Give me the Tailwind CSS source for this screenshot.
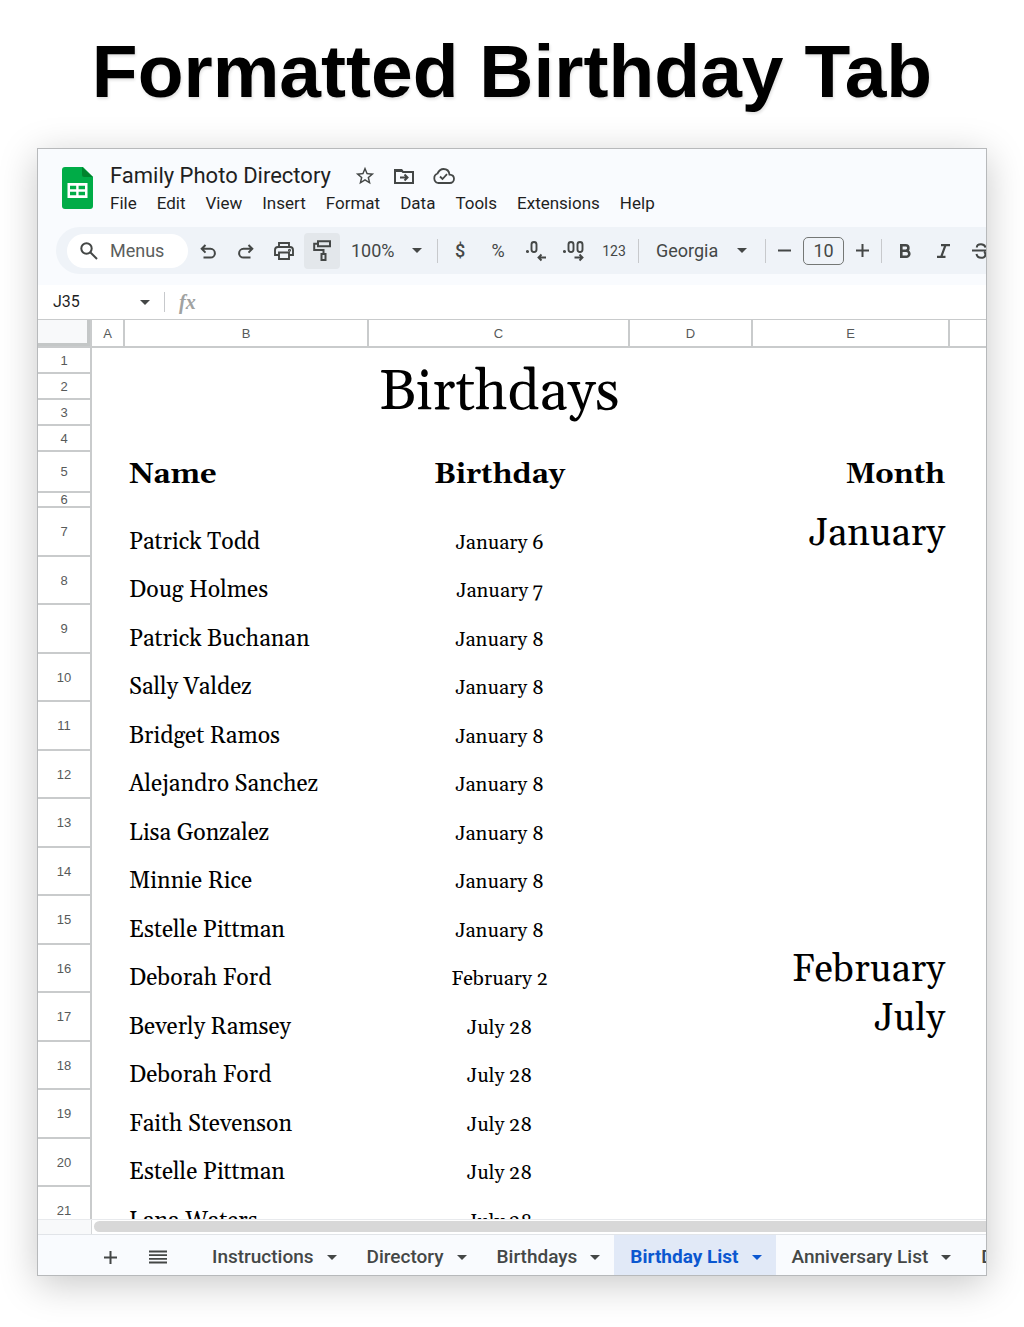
<!DOCTYPE html>
<html lang="en">
<head>
  <meta charset="UTF-8">
  <meta name="viewport" content="width=device-width, initial-scale=1.0">
  <title>Formatted Birthday Tab</title>
  <script src="https://cdn.jsdelivr.net/npm/@tailwindcss/browser@4"></script>
</head>
<body class="bg-white h-screen flex flex-col px-[37px] pb-[51px] font-[Roboto,sans-serif] text-[#444746]">
  <h1 class="h-[148px] shrink-0 pt-[26px] text-center text-[75px] leading-[90px] font-bold text-black whitespace-nowrap font-['Liberation_Sans',Arial,sans-serif] [text-shadow:1px_2px_3px_rgba(0,0,0,0.12)]">Formatted Birthday Tab</h1>

  <main class="flex-1 min-h-0 flex flex-col overflow-hidden border border-[#b7b9bb] bg-white shadow-[0_8px_36px_rgba(0,0,0,0.22)]">
    <!-- Title, menus and toolbar -->
    <header class="shrink-0 bg-[#f9fbfe] pb-[11px]">
      <div class="flex items-start pl-6 pt-[18px] h-[78px]">
        <svg class="w-[31px] h-[42px] shrink-0" viewBox="0 0 31 42" aria-hidden="true">
          <path d="M3 0h18l10 10v29a3 3 0 0 1-3 3H3a3 3 0 0 1-3-3V3a3 3 0 0 1 3-3z" fill="#00ac47"/>
          <path d="M20 0l11 10H22a2 2 0 0 1-2-2z" fill="#00832d"/>
          <path d="M5.500 16h20v15h-20zM8 18.800v3.400h6.200v-3.400zm8.600 0v3.400H23v-3.400zM8 24.800v3.400h6.200v-3.400zm8.600 0v3.400H23v-3.400z" fill="#fff" fill-rule="evenodd"/>
        </svg>
        <div class="ml-[17px] min-w-0">
          <div class="flex items-center h-[18px]">
            <h2 class="text-[22px] leading-7 text-[#1f1f1f] whitespace-nowrap">Family Photo Directory</h2>
            <button class="ml-[23px]" aria-label="Star">
              <svg class="w-[22px] h-[22px]" viewBox="0 0 24 24" fill="currentColor"><path d="M22 9.240l-7.190-.62L12 2 9.190 8.630 2 9.240l5.460 4.730L5.820 21 12 17.270 18.180 21l-1.630-7.030L22 9.240zM12 15.400l-3.760 2.270 1-4.280-3.320-2.880 4.380-.38L12 6.100l1.710 4.040 4.380.38-3.320 2.880 1 4.280L12 15.400z"/></svg>
            </button>
            <button class="ml-[18px]" aria-label="Move">
              <svg class="w-5 h-4" viewBox="0 0 20 16" fill="none" stroke="currentColor" stroke-width="2"><path d="M1 14V2h6l2 2h10v11H1z"/><path d="M1 1h7l2 3H1z" fill="currentColor" stroke="none"/><path d="M6 9.500h7M10.500 6.500l3 3-3 3"/></svg>
            </button>
            <button class="ml-[18px]" aria-label="Saved to Drive">
              <svg class="w-[23px] h-4" viewBox="0 0 23 16" fill="none" stroke="currentColor" stroke-width="1.800"><path d="M6 15a5 5 0 0 1-.5-9.500C7 2.500 9 1 11.500 1c3.200 0 5.600 2.300 6 5.600C20.300 6.700 22 8.500 22 10.800S20.200 15 17.800 15z"/><path d="M8 8.500l2.500 2.500 4.500-4.800"/></svg>
            </button>
          </div>
          <nav class="flex gap-5 mt-2 text-[17px] leading-5 text-[#1f1f1f]">
            <button>File</button>
            <button>Edit</button>
            <button>View</button>
            <button>Insert</button>
            <button>Format</button>
            <button>Data</button>
            <button>Tools</button>
            <button>Extensions</button>
            <button>Help</button>
          </nav>
        </div>
      </div>

      <div class="flex items-center h-[47px] ml-[18px] pl-[11px] rounded-l-full bg-[#eff3f8] text-lg overflow-hidden [&>*]:shrink-0">
        <label class="flex items-center w-[121px] h-[34px] pl-[13px] rounded-full bg-white">
          <svg class="w-[18px] h-[18px]" viewBox="0 0 18 18" fill="none" stroke="currentColor" stroke-width="2"><circle cx="6.500" cy="6.500" r="5.200"/><path d="M10.500 10.500l6.500 6.500"/></svg>
          <input class="ml-3 w-[62px] outline-none placeholder:text-[#5b5e5d]" type="text" placeholder="Menus" aria-label="Search the menus">
        </label>
        <button class="w-[38px] ml-px flex justify-center pt-0.5" aria-label="Undo">
          <svg class="w-4 h-[15px]" viewBox="0 0 16 15" fill="none" stroke="currentColor" stroke-width="2"><path d="M5.500 1L1.700 4.800l3.800 3.800M2 4.800h8.500a4.400 4.400 0 0 1 0 8.800H3.500"/></svg>
        </button>
        <button class="w-[38px] flex justify-center pt-0.5" aria-label="Redo">
          <svg class="w-4 h-[15px]" viewBox="0 0 16 15" fill="none" stroke="currentColor" stroke-width="2"><path d="M10.500 1l3.800 3.800-3.800 3.800M14 4.800H5.500a4.400 4.400 0 0 0 0 8.800h7"/></svg>
        </button>
        <button class="w-[38px] flex justify-center" aria-label="Print">
          <svg class="w-5 h-[18px]" viewBox="0 0 20 18" fill="none" stroke="currentColor" stroke-width="1.900"><path d="M5 5V1h10v4M5 13H1V8a3 3 0 0 1 3-3h12a3 3 0 0 1 3 3v5h-4"/><path d="M5 10.500h10V17H5z"/><circle cx="15.500" cy="8.200" r=".6"/></svg>
        </button>
        <button class="w-9 h-9 ml-px flex items-center justify-center rounded bg-[#e3e7eb]" aria-label="Paint format">
          <svg class="w-[18px] h-[21px]" viewBox="0 0 18 21" fill="none" stroke="currentColor" stroke-width="2"><path d="M5 1.200h12v5H5zM5 3.700H1.200V10h9.300v4"/><path d="M8.500 14h4v6h-4z"/></svg>
        </button>
        <label class="relative ml-[11px] w-[86px]">
          <select class="appearance-none w-full outline-none" aria-label="Zoom"><option>100%</option></select>
          <svg class="absolute right-[15px] top-[11px] w-[10px] h-[5px] pointer-events-none" viewBox="0 0 10 5" fill="currentColor"><path d="M0 0h10L5 5z"/></svg>
        </label>
        <span class="w-px h-6 bg-[#c7c9cc]"></span>
        <button class="w-[38px] ml-[3px] font-medium">$</button>
        <button class="w-[38px]">%</button>
        <button class="w-[38px] flex justify-center" aria-label="Decrease decimal places">
          <svg class="w-5 h-[22px]" viewBox="0 0 20 22" fill="none" stroke="currentColor" stroke-width="1.900"><circle cx="1.500" cy="11.500" r=".6" fill="currentColor"/><rect x="5.500" y="2" width="5" height="10" rx="2.500"/><path d="M20 17.500h-7.500M15.500 14.500l-3 3 3 3"/></svg>
        </button>
        <button class="w-[38px] flex justify-center" aria-label="Increase decimal places">
          <svg class="w-[22px] h-[22px]" viewBox="0 0 22 22" fill="none" stroke="currentColor" stroke-width="1.900"><circle cx="1.500" cy="11.500" r=".6" fill="currentColor"/><rect x="5.500" y="2" width="5" height="10" rx="2.500"/><rect x="14.500" y="2" width="5" height="10" rx="2.500"/><path d="M11.500 17.500H19M16.500 14.500l3 3-3 3"/></svg>
        </button>
        <button class="w-[42px] text-sm">123</button>
        <span class="ml-[3px] w-px h-6 bg-[#c7c9cc]"></span>
        <label class="relative ml-[17px] w-[109px]">
          <select class="appearance-none w-full outline-none" aria-label="Font"><option>Georgia</option></select>
          <svg class="absolute right-[18px] top-[11px] w-[10px] h-[5px] pointer-events-none" viewBox="0 0 10 5" fill="currentColor"><path d="M0 0h10L5 5z"/></svg>
        </label>
        <span class="w-px h-6 bg-[#c7c9cc]"></span>
        <button class="w-[37px] flex justify-center" aria-label="Decrease font size">
          <svg class="w-[13px] h-[13px]" viewBox="0 0 13 13" stroke="currentColor" stroke-width="2"><path d="M0 6.500h13"/></svg>
        </button>
        <input class="w-[41px] h-7 rounded-[5px] border border-[#747775] text-center outline-none" type="text" value="10" aria-label="Font size">
        <button class="w-[37px] flex justify-center" aria-label="Increase font size">
          <svg class="w-[13px] h-[13px]" viewBox="0 0 13 13" stroke="currentColor" stroke-width="2"><path d="M0 6.500h13M6.500 0v13"/></svg>
        </button>
        <span class="w-px h-6 bg-[#c7c9cc]"></span>
        <button class="w-[38px] ml-1 flex justify-center" aria-label="Bold">
          <svg class="w-[11px] h-[14px]" viewBox="0 0 11 14" fill="none" stroke="currentColor" stroke-width="2.600"><path d="M1.300 1.300h4.400a2.700 2.700 0 0 1 0 5.400H1.300zM1.300 6.700h5a3 3 0 0 1 0 6h-5z"/></svg>
        </button>
        <button class="w-[38px] flex justify-center" aria-label="Italic">
          <svg class="w-[13px] h-[14px]" viewBox="0 0 13 14" fill="none" stroke="currentColor" stroke-width="2.200"><path d="M4 1.200h9M0 12.800h8.500M8.500 1.200l-4.300 11.600"/></svg>
        </button>
        <button class="w-[38px] flex justify-center" aria-label="Strikethrough">
          <svg class="w-[18px] h-4" viewBox="0 0 18 16" fill="none" stroke="currentColor" stroke-width="2"><path d="M0 7.500h18M13.500 4.500C13 2.300 11.300 1.200 9 1.200S4.800 2.300 4.800 4.500M4.500 11c.5 2.500 2.200 3.800 4.600 3.800s4.300-1.200 4.300-3.400c0-1.200-.4-2-1.400-2.600"/></svg>
        </button>
      </div>
    </header>

    <!-- Name box and formula bar -->
    <div class="shrink-0 flex items-center h-[34px] pl-[15px]">
      <input class="w-[87px] text-base text-[#1f1f1f] outline-none" type="text" value="J35" aria-label="Name box">
      <svg class="w-[10px] h-[5px]" viewBox="0 0 10 5" fill="currentColor"><path d="M0 0h10L5 5z"/></svg>
      <span class="ml-[14px] w-px h-5 bg-[#c7c9cc]"></span>
      <label for="formula" class="ml-[14px] w-6 text-xl leading-6 italic font-bold text-[#a0a2a1] font-['Liberation_Serif',serif]">fx</label>
      <input id="formula" class="flex-1 min-w-0 outline-none" type="text">
    </div>

    <!-- Grid -->
    <div class="flex-1 min-h-0 overflow-hidden">
      <table class="w-full table-fixed border-separate border-spacing-0 text-black font-[Georgia,Gelasio,'Liberation_Serif',serif]">
        <colgroup>
          <col class="w-[54px]"><col class="w-[33px]"><col class="w-[244px]"><col class="w-[261px]"><col class="w-[123px]"><col class="w-[197px]"><col>
        </colgroup>
        <thead>
          <tr class="h-[29px] text-[13px] leading-4 text-[#575a5a] font-['Liberation_Sans',Arial,sans-serif] [&>th]:p-0 [&>th]:pt-0.5 [&>th]:font-normal [&>th]:border-t [&>th]:border-r-2 [&>th]:border-b-2 [&>th]:border-[#c9cbcc] [&>th:last-child]:border-r-0">
            <th class="bg-[#f8f9fa] shadow-[inset_-3px_-3px_0_#c4c7c7]"></th>
            <th>A</th><th>B</th><th>C</th><th>D</th><th>E</th><th></th>
          </tr>
        </thead>
        <tbody id="rows"></tbody>
      </table>
    </div>

    <!-- Horizontal scrollbar -->
    <div class="shrink-0 flex h-[15px] border-t border-[#e8eaed]">
      <div class="w-[54px] shrink-0 bg-[#f8f9fa] border-r border-[#d5d7d9]"></div>
      <div class="flex-1 ml-0.5 mt-px h-[11px] rounded-l-full bg-[#d8d8d8]"></div>
    </div>

    <!-- Sheet tabs -->
    <footer class="shrink-0 flex h-[41px] pl-[58px] border-t border-[#e1e4e8] bg-[#f9fbfe] text-[19px] font-medium whitespace-nowrap overflow-hidden [&>*]:shrink-0">
      <button class="w-7 pt-1 flex items-center justify-center" aria-label="Add sheet">
        <svg class="w-[13px] h-[13px]" viewBox="0 0 13 13" stroke="currentColor" stroke-width="2"><path d="M0 6.500h13M6.500 0v13"/></svg>
      </button>
      <button class="w-7 pt-1 ml-5 mr-6 flex items-center justify-center" aria-label="All sheets">
        <svg class="w-[18px] h-[14px]" viewBox="0 0 18 14" stroke="currentColor" stroke-width="1.800"><path d="M0 1.500h18M0 5.200h18M0 8.800h18M0 12.500h18"/></svg>
      </button>
      <div id="tabs" class="flex"></div>
    </footer>
  </main>

  <script>
    const people = [
      ['Patrick Todd', 'January 6', 'January'],
      ['Doug Holmes', 'January 7'],
      ['Patrick Buchanan', 'January 8'],
      ['Sally Valdez', 'January 8'],
      ['Bridget Ramos', 'January 8'],
      ['Alejandro Sanchez', 'January 8'],
      ['Lisa Gonzalez', 'January 8'],
      ['Minnie Rice', 'January 8'],
      ['Estelle Pittman', 'January 8'],
      ['Deborah Ford', 'February 2', 'February'],
      ['Beverly Ramsey', 'July 28', 'July'],
      ['Deborah Ford', 'July 28'],
      ['Faith Stevenson', 'July 28'],
      ['Estelle Pittman', 'July 28'],
      ['Lana Waters', 'July 28']
    ];

    const rowHead = n => `<th class="p-0 border-r-2 border-b-2 border-[#c9cbcc] text-[13px] leading-[13px] font-normal text-[#575a5a] font-['Liberation_Sans',Arial,sans-serif]">${n}</th>`;

    let html = `<tr class="h-[26px]">${rowHead(1)}<td></td><td></td><td rowspan="4" class="p-0 pt-[7px] align-top text-center text-[56px] leading-[76px] whitespace-nowrap">Birthdays</td><td></td><td></td><td></td></tr>`;
    for (let n = 2; n <= 4; n++) html += `<tr class="h-[26px]">${rowHead(n)}</tr>`;
    html += `<tr class="h-[41px] text-[29px] leading-8 font-bold">${rowHead(5)}<td></td><td class="p-0 pl-1 pt-1">Name</td><td class="p-0 pt-1 text-center">Birthday</td><td></td><td class="p-0 pr-[5px] pt-1 text-right">Month</td><td></td></tr>`;
    html += `<tr class="h-[15px]">${rowHead(6)}</tr>`;

    people.forEach(([name, date, month = ''], i) => {
      html += `<tr class="${i % 2 ? 'h-[48px]' : 'h-[49px]'}">${rowHead(i + 7)}<td></td>
        <td class="p-0 pl-1 align-bottom text-[23px] leading-7 whitespace-nowrap">${name}</td>
        <td class="p-0 pb-0.5 align-bottom text-center text-xl leading-6">${date}</td><td></td>
        <td class="p-0 pr-[5px] pt-0.5 text-right text-[38px] leading-10">${month}</td><td></td></tr>`;
    });
    document.getElementById('rows').innerHTML = html;

    const tabs = ['Instructions', 'Directory', 'Birthdays', 'Birthday List', 'Anniversary List', 'Directory List'];
    document.getElementById('tabs').innerHTML = tabs.map(name => `
      <button class="flex items-center gap-[13px] pt-1 pl-4 pr-[14px] ${name === 'Birthday List' ? 'bg-[#e1e9f7] text-[#0b57d0] font-bold' : ''}">${name}
        <svg class="w-[10px] h-[5px]" viewBox="0 0 10 5" fill="currentColor"><path d="M0 0h10L5 5z"/></svg>
      </button>`).join('');
  </script>
</body>
</html>
